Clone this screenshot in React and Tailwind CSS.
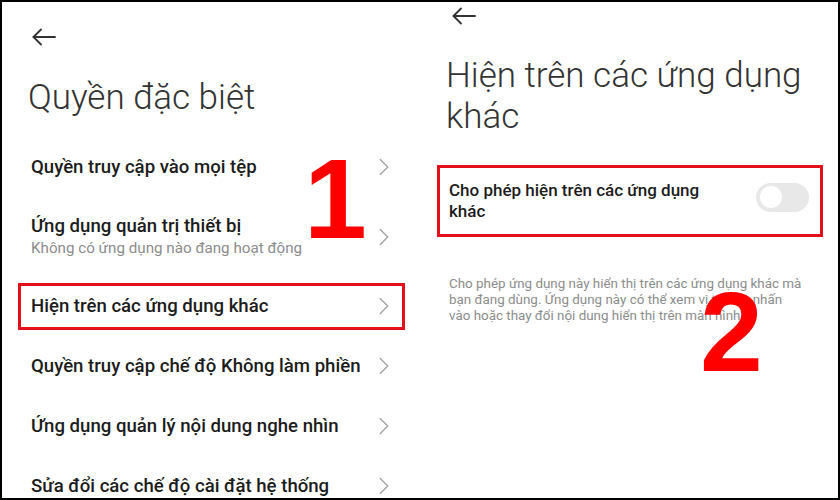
import { ChevronRight } from 'lucide-react'

const font = { fontFamily: 'Roboto, "Noto Sans", sans-serif' }

function BackArrow() {
  return (
    <svg width="24" height="18" viewBox="0 0 24 18" fill="none" stroke="#333" strokeWidth="1.8" strokeLinecap="round" strokeLinejoin="round">
      <path d="M23 9H1.5" />
      <path d="M9 1.5L1.5 9L9 16.5" />
    </svg>
  )
}

function Chevron() {
  return <ChevronRight className="h-[30px] w-[30px] shrink-0 text-[#a3a3a3]" strokeWidth={1.1} />
}

function Row({ title, subtitle, boxed, tall }) {
  return (
    <div className={`relative flex ${tall ? 'h-[79px]' : 'h-[60px]'} items-center justify-between pl-[29px] pr-[21px]`}>
      <div className="flex flex-col">
        <span className="text-[18.6px] leading-[22px] font-medium text-[#1c1c1c]">{title}</span>
        {subtitle && (
          <span className="mt-[1px] text-[15.2px] leading-[20px] text-[#8c8c8c]">{subtitle}</span>
        )}
      </div>
      <Chevron />
      {boxed && (
        <div className="absolute left-[16px] right-[15px] top-[7px] bottom-[6px] border-[3px] border-[#e3101c]" />
      )}
    </div>
  )
}

function SpecialPermissions() {
  return (
    <div className="w-[418px] shrink-0">
      <div className="flex h-[70px] items-center pl-[30px]">
        <BackArrow />
      </div>
      <h1 className="mt-[5px] pl-[26px] text-[35px] leading-[41px] font-light text-[#333]">Quyền đặc biệt</h1>
      <div className="mt-[19px]">
        <Row title="Quyền truy cập vào mọi tệp" />
        <Row title="Ứng dụng quản trị thiết bị" subtitle="Không có ứng dụng nào đang hoạt động" tall />
        <Row title="Hiện trên các ứng dụng khác" boxed />
        <Row title="Quyền truy cập chế độ Không làm phiền" />
        <Row title="Ứng dụng quản lý nội dung nghe nhìn" />
        <Row title="Sửa đổi các chế độ cài đặt hệ thống" />
      </div>
    </div>
  )
}

function DisplayOverApps() {
  return (
    <div className="w-[418px] shrink-0">
      <div className="flex h-[28px] items-center pl-[32px]">
        <BackArrow />
      </div>
      <h1 className="mt-[25px] pl-[26px] text-[35px] leading-[41px] font-light text-[#333]">
        Hiện trên các ứng dụng
        <br />
        khác
      </h1>
      <div className="relative mt-[28px] flex h-[72px] items-center justify-between pl-[29px] pr-[29px]">
        <span className="text-[17px] leading-[21px] font-medium text-[#1c1c1c]">
          Cho phép hiện trên các ứng dụng
          <br />
          khác
        </span>
        <div className="-mt-[8px] flex h-[29px] w-[53px] items-center rounded-full bg-[#e8e8e8] px-[4px]">
          <div className="h-[22px] w-[22px] rounded-full bg-white" />
        </div>
        <div className="absolute left-[17px] right-[15px] top-0 bottom-0 border-[3px] border-[#e3101c]" />
      </div>
      <p className="mt-[39px] pl-[29px] text-[13.4px] leading-[16px] text-[#8c8c8c]">
        Cho phép ứng dụng này hiển thị trên các ứng dụng khác mà
        <br />
        bạn đang dùng. Ứng dụng này có thể xem vị trí bạn nhấn
        <br />
        vào hoặc thay đổi nội dung hiển thị trên màn hình.
      </p>
    </div>
  )
}

export default function App() {
  return (
    <div className="relative flex h-[500px] w-[840px] overflow-hidden border-2 border-black bg-white" style={font}>
      <SpecialPermissions />
      <DisplayOverApps />
      <span
        className="absolute left-[302px] top-[141px] text-[113px] leading-none font-bold text-[#f00]"
        style={{ fontFamily: '"Liberation Sans", Arial, sans-serif' }}
      >
        1
      </span>
      <span
        className="absolute left-[698px] top-[274px] text-[113px] leading-none font-bold text-[#f00]"
        style={{ fontFamily: '"Liberation Sans", Arial, sans-serif' }}
      >
        2
      </span>
    </div>
  )
}
